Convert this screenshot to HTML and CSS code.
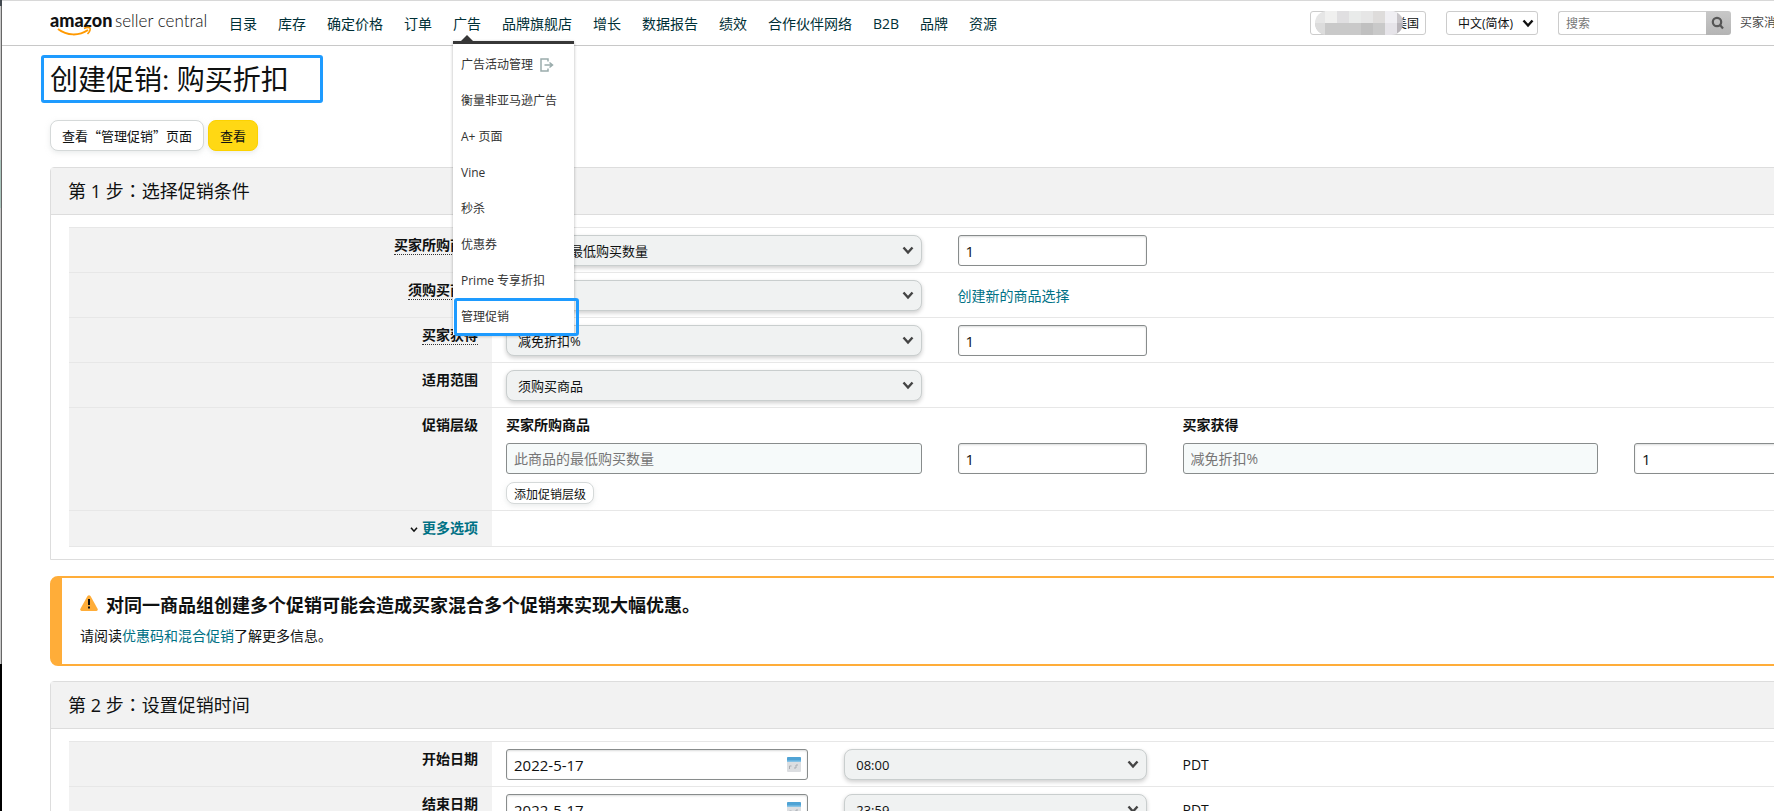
FILE: index.html
```html
<!doctype html>
<html lang="zh-CN">
  <head>
    <meta charset="UTF-8">
    <meta content="width=device-width, initial-scale=1.0" name="viewport">
    <title>创建促销: 购买折扣</title>
    <link rel="stylesheet" href="styles.css">
  </head>
  <body>
    <!-- shared icons -->
    <svg class="sprite" width="0" height="0">
      <symbol id="chevron" viewBox="0 0 12 10">
        <path d="M1.5 2.5 L6 7.5 L10.5 2.5" fill="none" stroke="currentColor" stroke-width="2.4"/>
      </symbol>
      <symbol id="calendar" viewBox="0 0 14 15">
        <rect width="14" height="15" rx="1" fill="#dcdee1"/>
        <path d="M0 1 a1 1 0 0 1 1 -1 H13 a1 1 0 0 1 1 1 V5 H0 Z" fill="#4fa3d5"/>
        <path d="M0 3.5 H14 V5 H0 Z" fill="#86c3e6"/>
        <path d="M2.500 12 V9 h2 M7 11 h2 V8 h2" fill="none" stroke="#a9adb3"/>
      </symbol>
    </svg>
    <div class="page">
      <header>
        <a class="logo" href="#" aria-label="amazon seller central">
          <svg width="164" height="30" viewBox="0 0 164 30">
            <text class="logo-bold" x="0" y="19">amazon</text>
            <text class="logo-light" x="65" y="19">seller central</text>
            <path d="M8 21 C17 28 29 28 38 22" fill="none" stroke="#ff9900" stroke-width="2"/>
            <path d="M34 20.500 C37 19 39.500 19.500 40 20 C40.500 21.500 39.500 24 37.500 26" fill="none" stroke="#ff9900" stroke-width="1.600"/>
          </svg>
        </a>
        <nav>
          <ul class="nav-list">
            <li><a href="#">目录</a></li>
            <li><a href="#">库存</a></li>
            <li><a href="#">确定价格</a></li>
            <li><a href="#">订单</a></li>
            <li class="open">
              <a href="#">广告</a>
              <ul class="menu">
                <li><a href="#">广告活动管理
                  <svg width="14" height="14" viewBox="0 0 14 14" fill="none" stroke="#9aacac" stroke-width="1.500"><path d="M8 3.500 V1 H1 V13 H8 V10.500 M4.500 7 H12 M9.500 4.500 L12.500 7 L9.500 9.500"/></svg>
                </a></li>
                <li><a href="#">衡量非亚马逊广告</a></li>
                <li><a href="#">A+ 页面</a></li>
                <li><a href="#">Vine</a></li>
                <li><a href="#">秒杀</a></li>
                <li><a href="#">优惠券</a></li>
                <li><a href="#">Prime 专享折扣</a></li>
                <li class="marked"><a href="#">管理促销</a></li>
              </ul>
            </li>
            <li><a href="#">品牌旗舰店</a></li>
            <li><a href="#">增长</a></li>
            <li><a href="#">数据报告</a></li>
            <li><a href="#">绩效</a></li>
            <li><a href="#">合作伙伴网络</a></li>
            <li><a href="#">B2B</a></li>
            <li><a href="#">品牌</a></li>
            <li><a href="#">资源</a></li>
          </ul>
        </nav>
        <div class="tools">
          <button class="account" type="button">美国
            <svg class="mosaic" width="88" height="24" viewBox="0 0 88 24">
              <clipPath id="pill"><rect width="88" height="24" rx="12"/></clipPath>
              <g clip-path="url(#pill)">
                <rect width="88" height="12" fill="#e6e6e6"/>
                <rect y="12" width="88" height="12" fill="#c9c9c9"/>
                <rect x="10" width="12" height="12" fill="#f0f0ef"/>
                <rect x="22" width="12" height="12" fill="#e0dfe1"/>
                <rect x="34" width="12" height="12" fill="#e9ebea"/>
                <rect x="58" width="12" height="12" fill="#dedcdb"/>
                <rect x="70" width="12" height="12" fill="#f0eff3"/>
                <rect x="82" width="6" height="12" fill="#c9c6ca"/>
                <rect y="12" width="10" height="12" fill="#dcdcdc"/>
                <rect x="46" y="12" width="12" height="12" fill="#c0c0c0"/>
                <rect x="70" y="12" width="12" height="12" fill="#e6e4e9"/>
                <rect x="82" y="12" width="6" height="12" fill="#b9b5ba"/>
              </g>
            </svg>
          </button>
          <div class="select language">
            <select aria-label="语言"><option>中文(简体)</option></select>
            <svg width="12" height="10"><use href="#chevron"/></svg>
          </div>
          <form class="search">
            <input type="search" placeholder="搜索" aria-label="搜索">
            <button type="button" aria-label="搜索">
              <svg width="14" height="14" viewBox="0 0 14 14" fill="none" stroke="#555" stroke-width="2.200"><circle cx="6" cy="6" r="4.200"/><path d="M8.800 8.800 L12 12.500"/></svg>
            </button>
          </form>
          <a class="messages" href="#">买家消息</a>
        </div>
      </header>

      <main>
        <h1>创建促销: 购买折扣</h1>
        <div class="actions">
          <button class="button" type="button">查看“管理促销”页面</button>
          <button class="button primary" type="button">查看</button>
        </div>

        <section class="panel">
          <h2>第 1 步<span class="colon" lang="zh-TW">：</span>选择促销条件</h2>
          <div class="rows">
            <div class="row">
              <div class="name"><label class="hint" for="buys">买家所购商品</label></div>
              <div class="fields">
                <div class="pair">
                  <div class="select"><select id="buys"><option>此商品的最低购买数量</option></select><svg width="12" height="10"><use href="#chevron"/></svg></div>
                  <input type="text" value="1" aria-label="最低购买数量">
                </div>
              </div>
            </div>
            <div class="row">
              <div class="name"><label class="hint" for="items">须购买商品</label></div>
              <div class="fields">
                <div class="pair">
                  <div class="select"><select id="items"><option></option></select><svg width="12" height="10"><use href="#chevron"/></svg></div>
                  <a href="#">创建新的商品选择</a>
                </div>
              </div>
            </div>
            <div class="row">
              <div class="name"><label class="hint" for="gets">买家获得</label></div>
              <div class="fields">
                <div class="pair">
                  <div class="select"><select id="gets"><option>减免折扣%</option></select><svg width="12" height="10"><use href="#chevron"/></svg></div>
                  <input type="text" value="1" aria-label="减免折扣">
                </div>
              </div>
            </div>
            <div class="row">
              <div class="name"><label for="applies">适用范围</label></div>
              <div class="fields">
                <div class="pair">
                  <div class="select"><select id="applies"><option>须购买商品</option></select><svg width="12" height="10"><use href="#chevron"/></svg></div>
                </div>
              </div>
            </div>
            <div class="row">
              <div class="name">促销层级</div>
              <div class="fields">
                <div class="tier">
                  <label for="tier-buys">买家所购商品</label>
                  <div class="pair">
                    <input id="tier-buys" type="text" placeholder="此商品的最低购买数量" disabled>
                    <input type="text" value="1" aria-label="层级购买数量">
                  </div>
                  <button class="button small" type="button">添加促销层级</button>
                </div>
                <div class="tier">
                  <label for="tier-gets">买家获得</label>
                  <div class="pair">
                    <input id="tier-gets" type="text" placeholder="减免折扣%" disabled>
                    <input type="text" value="1" aria-label="层级减免折扣">
                  </div>
                </div>
              </div>
            </div>
            <div class="row more">
              <div class="name">
                <svg width="8" height="7"><use href="#chevron"/></svg>
                <a href="#">更多选项</a>
              </div>
            </div>
          </div>
        </section>

        <section class="alert">
          <h3>
            <svg width="18" height="16" viewBox="0 0 18 16">
              <path d="M7.500 1 Q9 -.5 10.500 1 L17.700 14 Q18 16 16.500 16 H1.500 Q0 16 .3 14 Z" fill="#ffad39"/>
              <path d="M9 4 V10 M9 11.500 V13.500" stroke="#111" stroke-width="2"/>
            </svg>
            对同一商品组创建多个促销可能会造成买家混合多个促销来实现大幅优惠。
          </h3>
          <p>请阅读<a href="#">优惠码和混合促销</a>了解更多信息。</p>
        </section>

        <section class="panel">
          <h2>第 2 步<span class="colon" lang="zh-TW">：</span>设置促销时间</h2>
          <div class="rows">
            <div class="row">
              <div class="name"><label for="start">开始日期</label></div>
              <div class="fields">
                <div class="pair even">
                  <div class="date"><input id="start" type="text" value="2022-5-17"><svg width="14" height="15"><use href="#calendar"/></svg></div>
                  <div class="select"><select aria-label="开始时间"><option>08:00</option></select><svg width="12" height="10"><use href="#chevron"/></svg></div>
                </div>
                <span class="zone">PDT</span>
              </div>
            </div>
            <div class="row">
              <div class="name"><label for="end">结束日期</label></div>
              <div class="fields">
                <div class="pair even">
                  <div class="date"><input id="end" type="text" value="2022-5-17"><svg width="14" height="15"><use href="#calendar"/></svg></div>
                  <div class="select"><select aria-label="结束时间"><option>23:59</option></select><svg width="12" height="10"><use href="#chevron"/></svg></div>
                </div>
                <span class="zone">PDT</span>
              </div>
            </div>
          </div>
        </section>
      </main>
    </div>
  </body>
</html>
```
FILE: styles.css
```css
*, *::after {
  box-sizing: border-box
}
html {
  height: 100%;
  overflow: hidden
}
body {
  /* window edge down the left side */
  background: linear-gradient(#434a50 6px, #c8c8c8 6px 160px, #a9c4bc 160px 208px, #c8c8c8 208px 664px, #000 664px) 0 0 / 1px 100% no-repeat,
    linear-gradient(#434a50 6px, #666 6px 664px, #000 664px) 1px 0 / 1px 100% no-repeat,
    #fff;
  color: #0f1111;
  font: 14px/20px "Open Sans", "Noto Sans CJK SC", sans-serif;
  height: 100%;
  margin: 0;
  overflow: hidden;
  padding-left: 2px
}
.sprite {
  position: absolute
}
.page {
  min-width: 1902px
}
ul {
  list-style: none;
  margin: 0;
  padding: 0
}
a {
  color: #007185;
  text-decoration: none
}
input, select, button {
  color: #0f1111;
  font-family: inherit;
  margin: 0
}

/* header */
header {
  align-items: center;
  border-bottom: 1px solid #c8c8c8;
  border-top: 1px solid #d8d8d8;
  display: flex;
  height: 46px;
  padding: 0 116px 0 48px
}
.logo {
  display: flex;
  margin-right: 15px
}
.logo-bold, .logo-light {
  fill: #111;
  font-family: Lato, sans-serif;
  font-size: 18px
}
.logo-bold {
  font-weight: 900
}
.logo-light {
  font-size: 17px;
  font-weight: 300
}
nav {
  padding-top: 2px
}
.nav-list {
  display: flex;
  gap: 21px
}
.nav-list a {
  color: #002f36;
  display: block;
  white-space: nowrap
}
.open {
  position: relative
}
.open::after {
  border: 6px solid transparent;
  border-bottom-color: #373737;
  border-top: 0;
  content: "";
  left: 8px;
  position: absolute;
  top: 21px
}
.menu {
  background: #fff;
  border-top: 3px solid #373737;
  box-shadow: 0 1px 3px rgba(0, 0, 0, .3);
  left: 0;
  padding: 3px 0 0;
  position: absolute;
  top: 27px;
  width: 121px;
  z-index: 2
}
.menu li {
  position: relative
}
.menu a {
  align-items: center;
  color: #333;
  display: flex;
  font-size: 12px;
  gap: 7px;
  height: 36px;
  padding-left: 8px
}
.marked::after {
  border: 3px solid #1e9bff;
  border-radius: 3px;
  content: "";
  height: 38px;
  left: 1px;
  position: absolute;
  top: -1px;
  width: 125px
}
.tools {
  align-items: center;
  display: flex;
  font-size: 12px;
  gap: 20px;
  margin-left: auto
}
.account {
  background: #fff;
  border: 1px solid #ccc;
  border-radius: 3px;
  font-size: 12px;
  height: 24px;
  padding: 0 6px;
  position: relative;
  text-align: right;
  width: 116px
}
.mosaic {
  left: 4px;
  position: absolute;
  top: -1px
}
.search {
  display: flex
}
.search input {
  border: 1px solid #ccc;
  border-radius: 3px 0 0 3px;
  border-right: 0;
  font-size: 12px;
  height: 24px;
  padding: 0 7px;
  width: 148px
}
.search button {
  align-items: center;
  background: linear-gradient(#c8c8c8, #b4b4b4);
  border: 0;
  border-radius: 0 3px 3px 0;
  display: flex;
  height: 24px;
  justify-content: center;
  padding: 0;
  width: 25px
}
.messages {
  color: #444;
  margin-left: -11px
}

/* title and buttons */
main {
  padding: 9px 48px 0
}
h1 {
  border: 3px solid #1e9bff;
  border-radius: 3px;
  font-size: 28px;
  font-weight: 400;
  line-height: 42px;
  margin: 0 0 17px -9px;
  padding: 0 31px 0 6px;
  width: fit-content
}
.actions {
  display: flex;
  gap: 4px;
  margin-bottom: 16px
}
.button {
  background: #fff;
  border: 1px solid #d5d9d9;
  border-radius: 8px;
  box-shadow: 0 2px 5px rgba(213, 217, 217, .5);
  font-family: "Noto Sans CJK SC", sans-serif;
  font-size: 13px;
  height: 31px;
  padding: 0 11px
}
.primary {
  background: #ffd814;
  border-color: #fcd200
}
.small {
  display: block;
  font-size: 12px;
  height: 22px;
  margin-top: 8px;
  padding: 0 7px
}

/* form panels */
.panel {
  border: 1px solid #ddd;
  border-radius: 4px 4px 0 0
}
h2 {
  background: #f2f2f2;
  border-bottom: 1px solid #ddd;
  font-size: 18px;
  font-weight: 400;
  line-height: 46px;
  margin: 0;
  padding: 0 17px
}
.colon {
  font-family: "Noto Sans CJK TC", sans-serif;
  line-height: 1
}
.rows {
  border-bottom: 1px solid #e7e7e7;
  margin: 12px 18px
}
.row {
  border-top: 1px solid #e7e7e7;
  display: grid;
  grid-template-columns: 423px 1fr
}
.name {
  background: #f2f2f2;
  font-weight: 700;
  padding: 7px 14px 6px;
  text-align: right
}
.more .name {
  padding-bottom: 8px
}
.hint {
  border-bottom: 1px dotted #333;
  display: inline-block;
  line-height: 19px
}
.fields {
  column-gap: 36px;
  display: grid;
  grid-template-columns: 1fr 1fr;
  padding: 7px 14px 6px
}
.pair {
  align-items: center;
  column-gap: 36px;
  display: grid;
  grid-template-columns: 22fr 10fr
}
.even {
  grid-template-columns: 1fr 1fr
}
.tier label {
  display: block;
  font-weight: 700;
  margin-bottom: 8px
}
.zone {
  align-self: center
}
.fields input {
  border: 1px solid #888c8c;
  border-radius: 3px;
  box-shadow: inset 0 1px 2px rgba(15, 17, 17, .15);
  font-size: 15px;
  height: 31px;
  padding: 0 7px;
  width: 100%
}
.fields input:disabled {
  background: #f6fafa;
  box-shadow: none;
  font-size: 14px
}
input::placeholder {
  color: #767676
}
.select, .date {
  position: relative
}
.select select {
  appearance: none;
  background: #f0f2f2;
  border: 1px solid #c9cece;
  border-radius: 8px;
  box-shadow: 0 2px 4px rgba(15, 17, 17, .2);
  display: block;
  font-size: 13px;
  height: 31px;
  padding: 0 11px;
  width: 100%
}
.select svg {
  color: #444;
  pointer-events: none;
  position: absolute;
  right: 8px;
  top: 10px
}
.date svg {
  pointer-events: none;
  position: absolute;
  right: 7px;
  top: 8px
}
.language select {
  background: #fff;
  border-color: #ccc;
  border-radius: 3px;
  box-shadow: none;
  font-size: 12px;
  height: 24px;
  width: 92px
}
.language svg {
  color: #111;
  right: 4px;
  top: 7px
}

/* warning */
.alert {
  border: 2px solid #ffad39;
  border-left-width: 12px;
  border-radius: 8px;
  margin: 16px 0 15px;
  padding: 15px 18px 18px
}
h3 {
  display: flex;
  font-size: 18px;
  gap: 8px;
  line-height: 24px;
  margin: 0 0 9px
}
h3 svg {
  margin-top: 2px
}
.alert p {
  margin: 0
}
```
